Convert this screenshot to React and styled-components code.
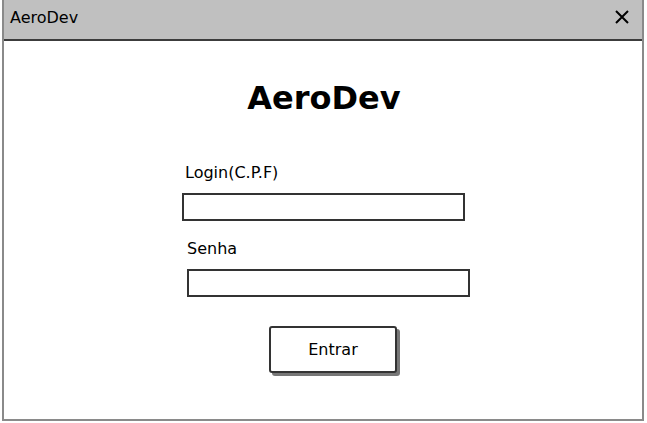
import React, { useState } from 'react'
import styled, { createGlobalStyle } from 'styled-components'

const GlobalStyle = createGlobalStyle`
    body {
        margin: 0;
        background: #ffffff;
        font-family: "DejaVu Sans", "Liberation Sans", sans-serif;
    }
`

const Window = styled.div`
    box-sizing: border-box;
    margin-left: 2px;
    width: 642px;
    height: 421px;
    border: 2px solid #8a8a8a;
    border-top: none;
    display: flex;
    flex-direction: column;
    background: #ffffff;
`

const TitleBar = styled.header`
    height: 39px;
    background: #c0c0c0;
    border-bottom: 2px solid #3c3c3c;
    display: flex;
    align-items: center;
    justify-content: space-between;
    padding: 0 12px 0 6px;
    flex-shrink: 0;
`

const TitleText = styled.span`
    font-size: 16px;
    line-height: 18px;
    margin-top: -4px;
    color: #000;
`

const CloseButton = styled.button`
    border: none;
    background: transparent;
    padding: 0;
    width: 16px;
    height: 16px;
    display: flex;
    cursor: pointer;
    margin-top: -6px;
`

const Body = styled.main`
    flex: 1;
    display: flex;
    flex-direction: column;
    align-items: center;
`

const Heading = styled.h1`
    margin: 38px 0 0 2px;
    font-size: 32px;
    font-weight: bold;
    line-height: 38px;
    color: #000;
`

const Form = styled.form`
    display: flex;
    flex-direction: column;
    margin-top: 47px;
    margin-left: 6px;
    width: 288px;
`

const Field = styled.div`
    display: flex;
    flex-direction: column;
    padding-left: ${p => p.$shift}px;
    margin-bottom: ${p => p.$gap}px;
`

const Label = styled.label`
    font-size: 16px;
    line-height: 18px;
    color: #000;
    margin-left: ${p => p.$indent}px;
    margin-bottom: 11px;
`

const Input = styled.input`
    box-sizing: border-box;
    width: 283px;
    height: 28px;
    border: 2px solid #333333;
    border-radius: 0;
    outline: none;
    padding: 0 4px;
    font-family: inherit;
    font-size: 14px;
`

const Submit = styled.button`
    align-self: center;
    margin-top: 29px;
    margin-left: 14px;
    box-sizing: border-box;
    width: 128px;
    height: 47px;
    border: 2px solid #333333;
    border-radius: 3px;
    background: #ffffff;
    box-shadow: 3px 3px 0 #777777;
    font-family: inherit;
    font-size: 16px;
    color: #000;
    cursor: pointer;
`

export default function App() {

    const [ cpf, setCpf ] = useState('')
    const [ senha, setSenha ] = useState('')

    return (
        <>
            <GlobalStyle />
            <Window>
                <TitleBar>
                    <TitleText>AeroDev</TitleText>
                    <CloseButton aria-label="Fechar">
                        <svg width="16" height="16" viewBox="0 0 16 16">
                            <path d="M2 2 L14 14 M14 2 L2 14" stroke="#000" strokeWidth="2" />
                        </svg>
                    </CloseButton>
                </TitleBar>
                <Body>
                    <Heading>AeroDev</Heading>
                    <Form onSubmit={ e => e.preventDefault() }>
                        <Field $shift={0} $gap={19}>
                            <Label htmlFor="cpf" $indent={3}>Login(C.P.F)</Label>
                            <Input id="cpf" value={ cpf } onChange={ e => setCpf(e.target.value) } />
                        </Field>
                        <Field $shift={5} $gap={0}>
                            <Label htmlFor="senha" $indent={0}>Senha</Label>
                            <Input id="senha" type="password" value={ senha } onChange={ e => setSenha(e.target.value) } />
                        </Field>
                        <Submit type="submit">Entrar</Submit>
                    </Form>
                </Body>
            </Window>
        </>
    )
}
